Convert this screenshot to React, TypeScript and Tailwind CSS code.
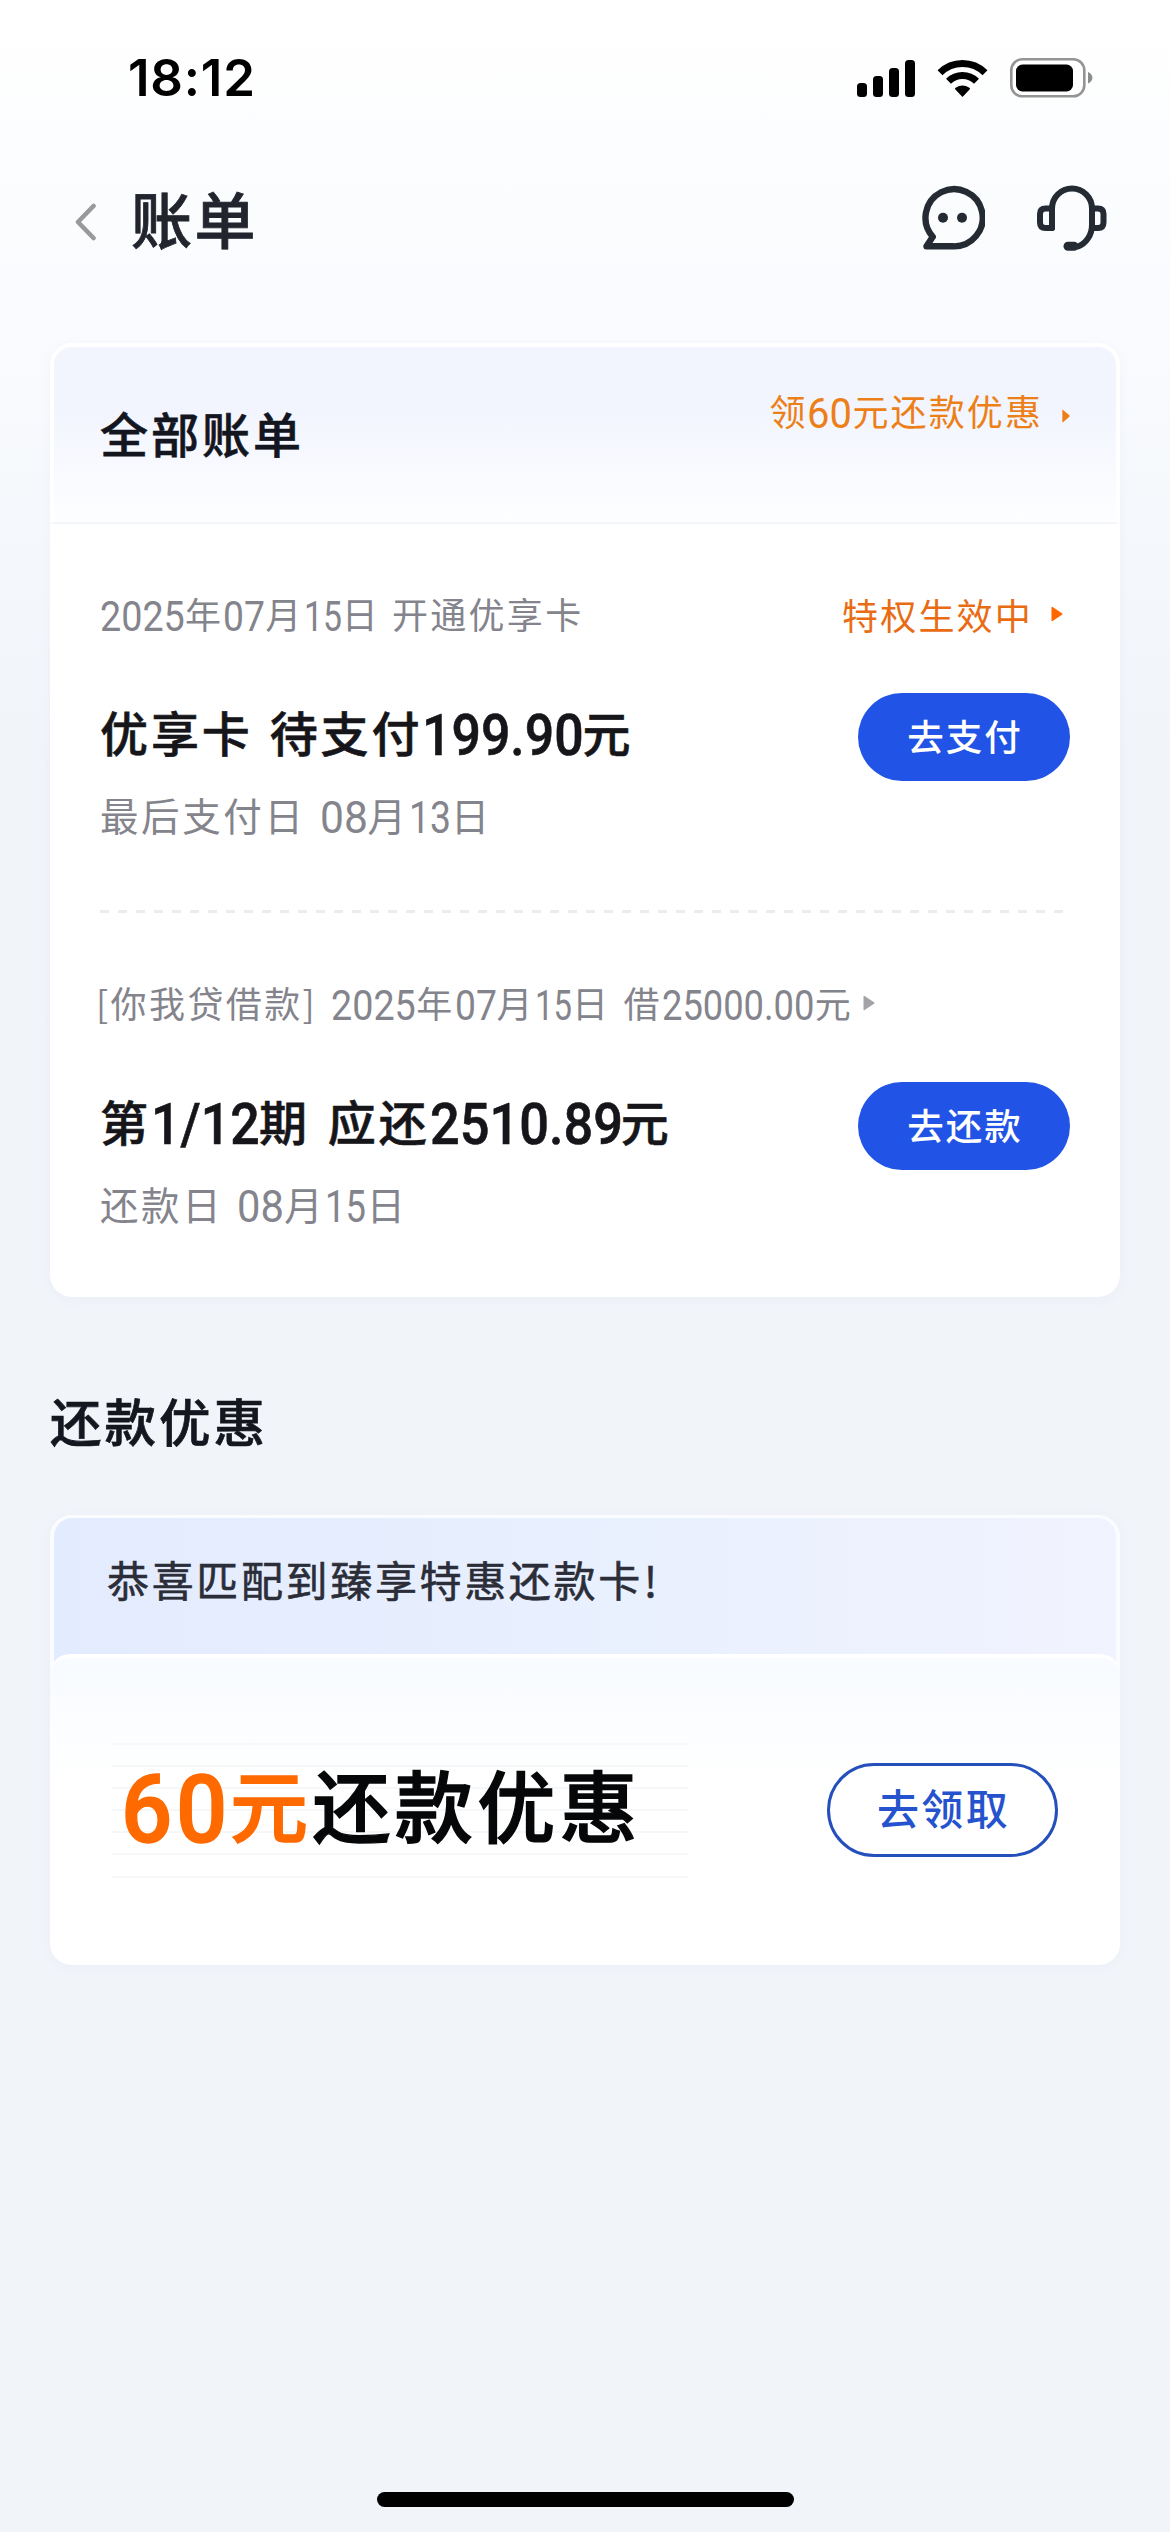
import React from "react";

const ADVANCE: Record<string, number> = { ".": 0.27, "/": 0.39 };

/** Condensed numerals: Roboto squeezed horizontally to fill `w` pixels. */
function Num({
  children,
  size,
  w,
  track = 0,
  className = "",
}: {
  children: string;
  size: number;
  w: number;
  track?: number;
  className?: string;
}) {
  const natural = [...children].reduce((sum, c) => sum + (ADVANCE[c] ?? 0.5635) + track, 0) * size;
  return (
    <span className={"inline-block whitespace-nowrap font-[Roboto] " + className} style={{ width: w, fontSize: size }}>
      <span
        className="inline-block origin-left translate-y-[0.05em]"
        style={{ scale: `${w / natural} 1`, letterSpacing: `${track}em` }}
      >
        {children}
      </span>
    </span>
  );
}

function Triangle({ w, h, className = "" }: { w: number; h: number; className?: string }) {
  return (
    <svg width={w} height={h} viewBox="0 0 12 16" preserveAspectRatio="none" className={"shrink-0 " + className}>
      <path d="M0.5 1.6Q0.5 0.2 1.6 1L11 7.2Q12 8 11 8.8L1.6 15Q0.5 15.8 0.5 14.4Z" fill="currentColor" />
    </svg>
  );
}

function StatusBar() {
  return (
    <div className="flex h-[156px] items-start justify-between pt-[56px] pr-[77px] pl-[128px]">
      <span className="h-[44px] font-[Inter] text-[51px] leading-[44px] font-semibold tracking-[0.8px] text-black">18:12</span>
      <div className="flex h-[44px] items-center">
        <svg width="58" height="38" viewBox="0 0 58 38" className="mr-[22px]">
          <rect x="0" y="24" width="10" height="14" rx="3.5" />
          <rect x="16" y="17" width="10" height="21" rx="3.5" />
          <rect x="32" y="9" width="10" height="29" rx="3.5" />
          <rect x="48" y="1" width="10" height="37" rx="3.5" />
        </svg>
        <svg width="51" height="38" viewBox="0 0 51 38" className="mr-[22px]">
          <g fill="none" stroke="#000" strokeWidth="7">
            <path d="M3 13.7A32 32 0 0 1 48 13.7" />
            <path d="M11.5 22.3A20 20 0 0 1 39.5 22.3" />
          </g>
          <path d="M25.5 38L18.4 30.6Q17.4 29.4 18.6 28.7A12.5 12.5 0 0 1 32.4 28.7Q33.6 29.4 32.6 30.6Z" />
        </svg>
        <svg width="83" height="40" viewBox="0 0 83 40">
          <rect x="1.3" y="1.3" width="73" height="37" rx="11" fill="#fff" stroke="#949494" strokeWidth="2.6" />
          <rect x="6" y="6.5" width="57" height="27" rx="6.5" />
          <path d="M78 14Q82.4 16 82.4 19.7T78 25.5Z" fill="#8c8c8c" />
        </svg>
      </div>
    </div>
  );
}

function TitleBar() {
  return (
    <div className="flex h-[122px] items-center pt-[2px] pr-[63px] pl-[74px]">
      <svg width="22" height="38" viewBox="0 0 22 38" className="mt-[7px] mr-[35px]">
        <path d="M19.5 3L4 19L19.5 35" fill="none" stroke="#999" strokeWidth="4.6" strokeLinecap="round" strokeLinejoin="round" />
      </svg>
      <h1 className="text-[61px] leading-[70px] font-medium tracking-[2.6px] text-[#22242e] [-webkit-text-stroke:0.8px_#22242e]">账单</h1>
      <div className="ml-auto flex items-start gap-[52px]">
        <svg width="64" height="66" viewBox="0 0 64 66" fill="none" stroke="#242b33" strokeWidth="6.4" strokeLinejoin="round">
          <path d="M5.5 61.3L11.8 51.8A28.6 28.6 0 1 1 32 61.3Z" />
          <circle cx="22" cy="32.8" r="5" fill="#242b33" stroke="none" />
          <circle cx="41" cy="32.8" r="5" fill="#242b33" stroke="none" />
        </svg>
        <svg width="70" height="66" viewBox="0 0 70 66" fill="none" stroke="#242b33" strokeWidth="6" strokeLinejoin="round" strokeLinecap="round">
          <path d="M15 43V23.5A20 20 0 0 1 55 23.5V40C55 50 49 58.5 41 61.5" />
          <path d="M15 23.5H8.5Q3 23.5 3 29V37.5Q3 43 8.5 43H15" />
          <path d="M56 23.5H61Q66.5 23.5 66.5 29V37.5Q66.5 43 61 43H56" />
          <path d="M31 61.2H37" strokeWidth="9" />
        </svg>
      </div>
    </div>
  );
}

function PayButton({ children }: { children: string }) {
  return (
    <button className="flex h-[88px] w-[212px] shrink-0 items-center justify-center rounded-full bg-[#2154e6] pb-[2px] pl-[2px] text-[36.5px] leading-none font-medium tracking-[2px] text-white">
      {children}
    </button>
  );
}

function BillCard() {
  return (
    <section className="mx-[50px] mt-[65px] h-[954px] overflow-hidden rounded-[22px] bg-white shadow-[0_2px_12px_rgba(130,150,190,0.06)]">
      <div className="flex h-[181px] items-start justify-between rounded-t-[22px] border-x-4 border-t-4 border-b-2 border-white border-b-[#f3f5f9] bg-linear-to-b from-[#f2f5fe] from-35% to-[#fdfeff] pr-[46px] pl-[46px]">
        <h2 className="mt-[59px] text-[48px] leading-[52px] font-medium tracking-[3px] text-[#14161f] [-webkit-text-stroke:0.6px_#14161f]">全部账单</h2>
        <div className="mt-[44px] flex h-[40px] items-center text-[#ec7f17]">
          <div className="flex items-baseline text-[36px] leading-none tracking-[2.1px]">
            <span>领</span>
            <Num size={43} w={45}>60</Num>
            <span>元还款优惠</span>
          </div>
          <Triangle w={8} h={14} className="mt-[9px] ml-[19px]" />
        </div>
      </div>

      <div className="px-[50px] pt-[70px]">
        <div className="flex h-[40px] items-center justify-between text-[36px] leading-none">
          <div className="flex items-baseline tracking-[2.3px] text-[#84848c]">
            <Num size={43} w={85}>2025</Num>
            <span>年</span>
            <Num size={43} w={42}>07</Num>
            <span>月</span>
            <Num size={43} w={38}>15</Num>
            <span>日</span>
            <span className="ml-[12px]">开通优享卡</span>
          </div>
          <div className="flex items-center text-[#e96c14]">
            <span className="tracking-[2.2px]">特权生效中</span>
            <Triangle w={12} h={16} className="mr-[7px] ml-[18px] text-[#ff6600]" />
          </div>
        </div>

        <div className="mt-[59px] flex items-center justify-between">
          <div className="flex items-baseline pb-[10px] text-[48px] leading-none font-medium tracking-[2.9px] text-[#16161a] [-webkit-text-stroke:0.6px_#16161a]">
            <span>优享卡</span>
            <span className="ml-[17px]">待支付</span>
            <Num size={58} w={160}>199.90</Num>
            <span>元</span>
          </div>
          <PayButton>去支付</PayButton>
        </div>

        <div className="mt-[12px] flex h-[42px] items-baseline text-[38.5px] leading-none tracking-[2.6px] text-[#84848c]">
          <span>最后支付日</span>
          <Num size={45} w={48} className="ml-[14px]">08</Num>
          <span>月</span>
          <Num size={45} w={42}>13</Num>
          <span>日</span>
        </div>

        <div className="mt-[75px] h-[3px] w-[970px] bg-[repeating-linear-gradient(90deg,#ececee_0_9px,transparent_9px_18px)]" />

        <div className="mt-[70px] flex h-[40px] items-center text-[36px] leading-none text-[#84848c]">
          <div className="flex items-baseline tracking-[2.4px]">
            <span className="ml-[-4px]">[</span>
            <span>你我贷借款</span>
            <span>]</span>
            <Num size={43} w={85} className="ml-[14px]">2025</Num>
            <span>年</span>
            <Num size={43} w={42}>07</Num>
            <span>月</span>
            <Num size={43} w={37}>15</Num>
            <span>日</span>
            <span className="ml-[13px]">借</span>
            <Num size={43} w={153}>25000.00</Num>
            <span>元</span>
          </div>
          <Triangle w={12} h={16} className="ml-[10px] text-[#a3a3a7]" />
        </div>

        <div className="mt-[59px] flex items-center justify-between">
          <div className="flex items-baseline pb-[10px] text-[48px] leading-none font-medium tracking-[2.9px] text-[#16161a] [-webkit-text-stroke:0.6px_#16161a]">
            <span>第</span>
            <Num size={58} w={108}>1/12</Num>
            <span>期</span>
            <span className="ml-[18px]">应还</span>
            <Num size={58} w={191}>2510.89</Num>
            <span>元</span>
          </div>
          <PayButton>去还款</PayButton>
        </div>

        <div className="mt-[12px] flex h-[42px] items-baseline text-[38.5px] leading-none tracking-[2.6px] text-[#84848c]">
          <span>还款日</span>
          <Num size={45} w={47} className="ml-[14px]">08</Num>
          <span>月</span>
          <Num size={45} w={41}>15</Num>
          <span>日</span>
        </div>
      </div>
    </section>
  );
}

function OfferCard() {
  return (
    <section className="mx-[50px] mt-[61px] h-[450px] overflow-hidden rounded-[22px] bg-white shadow-[0_2px_12px_rgba(130,150,190,0.05)]">
      <div className="h-[170px] rounded-t-[22px] border-x-4 border-t-3 border-[#fafcff] bg-linear-to-r from-[#e3ebfe] via-[#e9f0fe] via-55% to-[#f1f3fe] pt-[37px] pl-[53px] text-[42px] leading-[48px] tracking-[2.65px] text-[#2b2e38] [-webkit-text-stroke:0.6px_#2b2e38]">
        恭喜匹配到臻享特惠还款卡<span className="ml-[1px]">!</span>
      </div>
      <div className="-mt-[31px] flex h-[311px] items-start justify-between rounded-t-[20px] border-t-4 border-white bg-linear-to-b from-[#f8fbff] to-white to-42% pr-[62px] pl-[62px]">
        <div className="mt-[85px] flex h-[138px] w-[576px] items-center bg-[repeating-linear-gradient(180deg,#f6f7f9_0_2px,transparent_2px_22.1px)] pb-[15px] pl-[9px]">
          <div className="flex items-baseline text-[78px] leading-none font-medium tracking-[4.4px] text-[#060709] [-webkit-text-stroke:1.4px_currentColor]">
            <Num size={95} w={109} track={0.04} className="text-[#ff6a00]">60</Num>
            <span className="text-[#ff6a00]">元</span>
            <span>还款优惠</span>
          </div>
        </div>
        <button className="mt-[105px] flex h-[94px] w-[231px] items-center justify-center rounded-full border-3 border-[#2550bb] pb-[7px] pl-[2px] text-[42px] leading-none font-medium tracking-[2.4px] text-[#2552cd]">
          去领取
        </button>
      </div>
    </section>
  );
}

export default function App() {
  return (
    <main
      lang="zh-CN"
      className="flex h-[2532px] w-[1170px] flex-col overflow-hidden bg-linear-to-b from-white via-[#f9fbfe] via-13% to-[#f1f4f9] to-30% font-['Noto_Sans_CJK_SC',sans-serif]"
    >
      <StatusBar />
      <TitleBar />
      <BillCard />
      <h2 className="mt-[97px] ml-[50px] h-[60px] text-[51.5px] leading-[52px] font-medium tracking-[3px] text-[#14171f] [-webkit-text-stroke:0.7px_#14171f]">还款优惠</h2>
      <OfferCard />
      <div className="mx-auto mt-auto mb-[25px] h-[15px] w-[417px] rounded-full bg-black" />
    </main>
  );
}
